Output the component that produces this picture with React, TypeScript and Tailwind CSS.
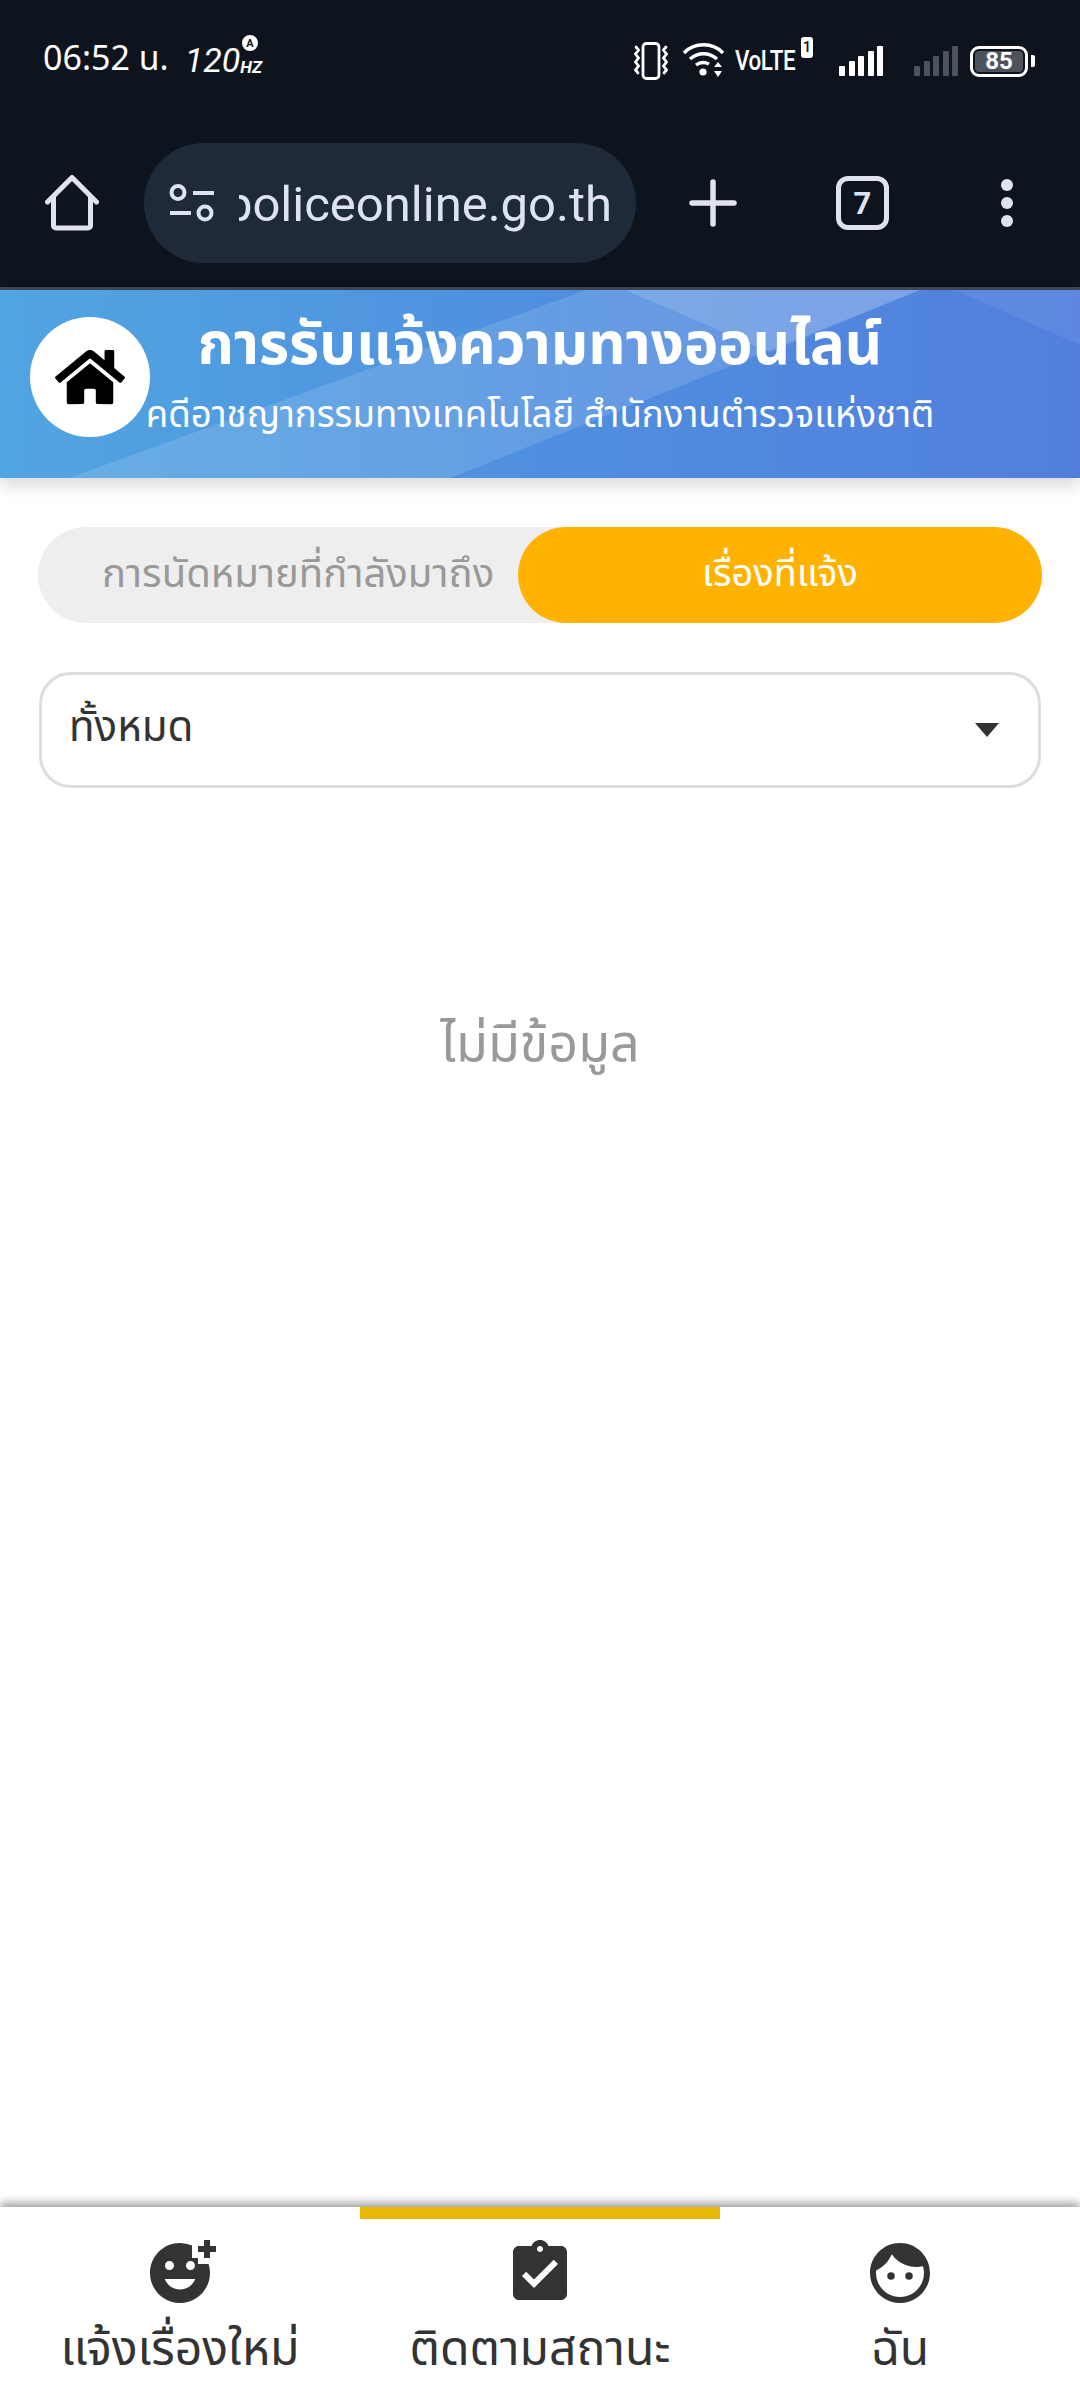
import { FaHome } from "react-icons/fa";
import { MdAddReaction, MdAssignmentTurnedIn, MdFace } from "react-icons/md";

const thai = "font-['Noto_Sans_Thai','Noto_Sans','Liberation_Sans',sans-serif]";

function Bars({ dim }: { dim?: boolean }) {
  return (
    <svg width="44" height="30" viewBox="0 0 44 30" fill={dim ? "#4d535c" : "#fff"}>
      <rect x="0" y="20" width="6" height="10" rx="1" />
      <rect x="10" y="15" width="6" height="15" rx="1" />
      <rect x="19" y="10" width="6" height="20" rx="1" />
      <rect x="29" y="5" width="6" height="25" rx="1" />
      <rect x="38" y="0" width="6" height="30" rx="1" />
    </svg>
  );
}

function StatusBar() {
  return (
    <div className="flex h-[80px] items-end justify-between pl-[43px] pr-[45px] text-white">
      <div className="flex items-center font-['Roboto',sans-serif]">
        <span className={`text-[34px] leading-[40px] ${thai}`}>06:52 น.</span>
        <span className="relative ml-[16px] flex items-end italic">
          <span className="text-[34px] leading-[40px]">120</span>
          <span className="mb-[3px] text-[17px] leading-[20px] font-bold">HZ</span>
          <span className="absolute -top-[5px] right-[4px] flex h-[16px] w-[16px] items-center justify-center rounded-full bg-white text-[11px] leading-none font-bold not-italic text-[#0e141e]">
            A
          </span>
        </span>
      </div>
      <div className="flex items-center">
        <svg width="36" height="38" viewBox="0 0 36 38" fill="none" stroke="#fff" strokeWidth="2.8" strokeLinecap="round">
          <rect x="10" y="1.5" width="16" height="35" rx="3.5" />
          <path d="M3 5l2.5 3-3 4 3 4-3 4 3 4-3 4 2.5 3M33 5l-2.5 3 3 4-3 4 3 4-3 4 3 4-2.5 3" />
        </svg>
        <svg className="ml-[14px]" width="41" height="36" viewBox="0 0 41 36" fill="#fff">
          <path d="M1 10C11-1 30-1 40 10" fill="none" stroke="#fff" strokeWidth="3.4" />
          <path d="M7 16c8-7 19-7 27 0" fill="none" stroke="#fff" strokeWidth="3.4" />
          <path d="M13 22c4-3 9-3 13-1" fill="none" stroke="#fff" strokeWidth="3.4" />
          <circle cx="20" cy="29" r="3.6" />
          <path d="M31 24h8l-4-5zM31 28h8l-4 6z" />
        </svg>
        <div className="relative ml-[11px] h-[30px] w-[78px] font-['Roboto',sans-serif] text-[28px] leading-[30px] font-medium">
          <span className="inline-block origin-left scale-x-[0.8] tracking-[-0.5px]">VoLTE</span>
          <span className="absolute -top-[9px] right-0 flex h-[21px] w-[12px] items-center justify-center rounded-[3px] bg-white text-[15px] leading-none text-[#0e141e]">
            1
          </span>
        </div>
        <div className="ml-[26px] flex">
          <Bars />
        </div>
        <div className="ml-[31px] flex">
          <Bars dim />
        </div>
        <div className="ml-[12px] flex items-center">
          <div className="flex h-[31px] w-[58px] items-center justify-center rounded-[9px] border-[3px] border-white p-[2px]">
            <div className="flex h-full w-full items-center justify-center rounded-[4px] bg-[#4d535c] font-['Roboto',sans-serif] text-[24px] leading-none font-bold">
              85
            </div>
          </div>
          <div className="ml-[3px] h-[12px] w-[4px] rounded-r-[2px] bg-white" />
        </div>
      </div>
    </div>
  );
}

function Toolbar() {
  return (
    <div className="mt-[63px] flex h-[120px] items-center pl-[45px] text-[#dfe3f0]">
      <svg width="54" height="56" viewBox="0 0 54 56" fill="none" stroke="#dfe3f0" strokeWidth="5" strokeLinecap="round" strokeLinejoin="round">
        <path d="M2.5 27L27 2.5 51.5 27" />
        <path d="M8.5 22v28.5a2.5 2.5 0 002.5 2.5h32a2.5 2.5 0 002.5-2.5V22" />
      </svg>
      <div className="ml-[45px] flex h-[120px] w-[492px] shrink-0 items-center rounded-full bg-[#1e2a38] pl-[25px]">
        <svg className="shrink-0" width="45" height="38" viewBox="0 0 45 38" fill="none" stroke="#dfe3f0" strokeWidth="4">
          <circle cx="9" cy="8.5" r="6.5" />
          <circle cx="36" cy="29" r="6.5" />
          <path d="M24 9h21M1 29h21" />
        </svg>
        <div className="ml-[25px] mt-[3px] flex w-[373px] justify-end overflow-hidden whitespace-nowrap font-['Roboto',sans-serif] text-[49px] leading-[64px]">
          policeonline.go.th
        </div>
      </div>
      <svg className="ml-[53px]" width="48" height="48" viewBox="0 0 48 48" stroke="#dfe3f0" strokeWidth="5.5" strokeLinecap="round">
        <path d="M24 3v42M3 24h42" />
      </svg>
      <div className="ml-[99px] flex h-[54px] w-[53px] items-center justify-center rounded-[12px] border-[5px] border-[#dfe3f0] font-['Roboto',sans-serif] text-[31px] leading-none font-bold">
        7
      </div>
      <div className="ml-[112px] flex flex-col gap-[6px]">
        <div className="h-[12px] w-[12px] rounded-full bg-[#dfe3f0]" />
        <div className="h-[12px] w-[12px] rounded-full bg-[#dfe3f0]" />
        <div className="h-[12px] w-[12px] rounded-full bg-[#dfe3f0]" />
      </div>
    </div>
  );
}

function Banner() {
  return (
    <div className="relative z-10 h-[188px] overflow-hidden bg-gradient-to-r from-[#51a5e1] via-[#4f8fdf] to-[#527fdd] shadow-[0_8px_14px_rgba(0,0,0,0.14)]">
      <svg className="absolute inset-0" width="1080" height="188" viewBox="0 0 1080 188">
        <polygon points="586,0 920,0 450,188 69,188" fill="#fff" opacity="0.13" />
        <polygon points="625,0 920,0 770,62" fill="#fff" opacity="0.14" />
        <polygon points="955,0 1080,0 1080,55" fill="#fff" opacity="0.07" />
      </svg>
      {/* circle sits over the centred titles */}
      <div className="absolute top-[27px] left-[30px] flex h-[120px] w-[120px] items-center justify-center rounded-full bg-white">
        <FaHome className="h-[62px] w-[70px] text-black" />
      </div>
      <div className={`relative flex flex-col items-center text-white ${thai}`}>
        <div className="mt-[24px] text-[58px] leading-[64px] font-bold whitespace-nowrap">การรับแจ้งความทางออนไลน์</div>
        <div className="mt-[16px] text-[36.6px] leading-[44px] whitespace-nowrap">คดีอาชญากรรมทางเทคโนโลยี สำนักงานตำรวจแห่งชาติ</div>
      </div>
    </div>
  );
}

function Tabs() {
  return (
    <div className="mx-[38px] mt-[49px] flex h-[96px] rounded-full bg-[#eeeeee]">
      <div className="flex w-[480px] items-center justify-center pl-[40px] text-[40px] leading-[50px] whitespace-nowrap text-[#999999]">
        การนัดหมายที่กำลังมาถึง
      </div>
      <div className="flex flex-1 items-center justify-center rounded-full bg-[#ffb300] text-[38px] leading-[50px] text-white">
        เรื่องที่แจ้ง
      </div>
    </div>
  );
}

function NavItem({ icon, label }: { icon: React.ReactNode; label: string }) {
  return (
    <div className="flex flex-1 flex-col items-center">
      <div className="mt-[30px] h-[72px]">{icon}</div>
      <div className="mt-[12px] text-[48px] leading-[60px] whitespace-nowrap text-[#333333]">{label}</div>
    </div>
  );
}

export default function App() {
  return (
    <div className={`flex h-[2400px] w-[1080px] flex-col bg-white ${thai}`}>
      <div className="h-[290px] shrink-0 border-b-[3px] border-[#3f4754] bg-[#0e141e]">
        <StatusBar />
        <Toolbar />
      </div>
      <Banner />
      <Tabs />

      <div className="mx-[39px] mt-[49px] flex h-[116px] items-center justify-between rounded-[32px] border-[3px] border-[#dddddd] pl-[27px] pr-[39px]">
        <span className="-mt-[4px] text-[42px] leading-[50px] text-[#333333]">ทั้งหมด</span>
        <svg width="24" height="14" viewBox="0 0 24 14" fill="#333333">
          <path d="M0 0h24L12 14z" />
        </svg>
      </div>

      <div className="mt-[220px] flex-1 text-center text-[52px] leading-[74px] text-[#999999]">ไม่มีข้อมูล</div>

      <div className="relative flex h-[193px] shrink-0 bg-white shadow-[0_-3px_10px_rgba(0,0,0,0.45)]">
        <div className="absolute top-0 left-[360px] h-[12px] w-[360px] bg-[#eab907]" />
        <NavItem icon={<MdAddReaction className="h-[72px] w-[72px] text-[#333333]" />} label="แจ้งเรื่องใหม่" />
        <NavItem icon={<MdAssignmentTurnedIn className="h-[72px] w-[72px] text-[#333333]" />} label="ติดตามสถานะ" />
        <NavItem icon={<MdFace className="h-[72px] w-[72px] text-[#333333]" />} label="ฉัน" />
      </div>
    </div>
  );
}
